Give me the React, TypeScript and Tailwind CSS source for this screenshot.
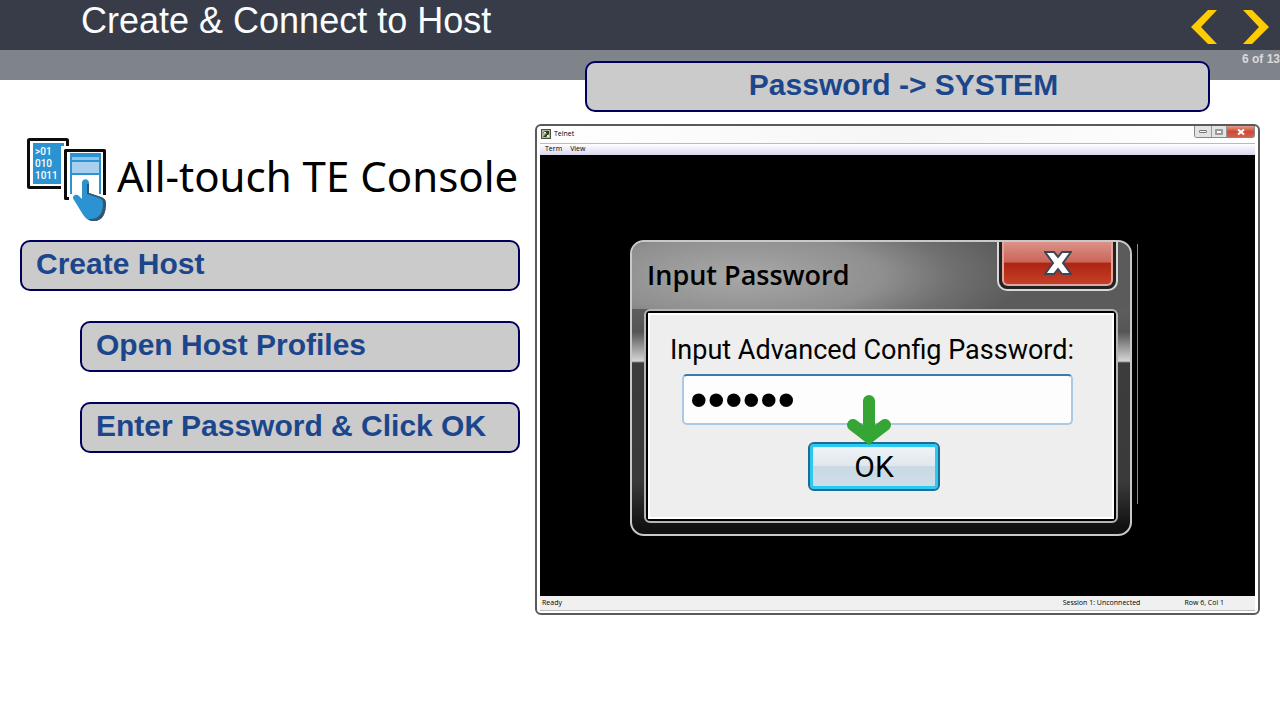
import type { ReactNode } from 'react';

interface StepProps {
  children: ReactNode;
  nested?: boolean;
}

function Step({ children, nested }: StepProps) {
  return (
    <li
      className={`flex h-[51px] items-center rounded-[10px] border-2 border-[#00005c] bg-[#cbcbcb] px-3.5 pb-1 font-['Liberation_Sans'] text-[30px] font-bold leading-9 text-[#1c468c] whitespace-nowrap ${
        nested ? 'ml-[60px]' : ''
      }`}
    >
      {children}
    </li>
  );
}

function ConsoleLogo() {
  return (
    <svg viewBox="0 0 80 84" className="h-[84px] w-20 shrink-0" aria-hidden="true">
      <rect x="1.5" y="1.5" width="39" height="48" rx="1" fill="#fff" stroke="#0b0b0b" strokeWidth="3" />
      <rect x="6" y="5" width="31" height="41" fill="#2b93d2" />
      <g fill="#fff" fontFamily="Roboto, sans-serif" fontSize="10" fontWeight="500">
        <text x="8" y="17">&gt;01</text>
        <text x="8" y="29">010</text>
        <text x="8" y="41">1011</text>
      </g>
      <path d="M34 8h46v52H34z" fill="#fff" />
      <path d="M42 60.500H38.500V12.500H77.500V57" fill="none" stroke="#0b0b0b" strokeWidth="3" strokeLinejoin="round" />
      <path d="M43 15h31v41H43z" fill="#2b93d2" />
      <path d="M45 19h27v3H45z" fill="#8cc4ea" />
      <path d="M45 24h27v11H45z" fill="#a9cfee" />
      <path d="M45 37h27v19H45z" fill="#fff" />
      <path
        d="M55 45c0-5 7-5 7 0v10l12 4c3 1 5 3 5 6 0 10-3 18-12 18-6 0-9-3-12-8l-8-13c-3-4 2-7 5-4l3 3z"
        fill="#2b93d2"
        stroke="#fff"
        strokeWidth="3"
        paintOrder="stroke"
      />
      <path d="M62 46v9l12 4c3 1 5 3 5 6 0 10-3 18-12 18-2 0-4 0-6-2 11 1 15-6 15-15 0-4-1-5-4-6l-12-4V46z" fill="#35546f" />
    </svg>
  );
}

function WindowButtons() {
  return (
    <div className="flex h-3 w-[61px] overflow-hidden rounded-b-[3px] border border-t-0 border-[#888]">
      <button aria-label="Minimize" className="flex w-4 items-center justify-center bg-[#e3e3e3]">
        <span className="h-[3px] w-2 rounded-[1px] border border-[#777] bg-white" />
      </button>
      <button aria-label="Maximize" className="flex w-4 items-center justify-center border-x border-[#999] bg-[#e3e3e3]">
        <span className="h-[6px] w-2 rounded-[1px] border-2 border-[#999] bg-white" />
      </button>
      <button aria-label="Close" className="flex flex-1 items-center justify-center bg-linear-to-b from-[#e39a8b] via-[#cf4a34] to-[#d0604c]">
        <svg viewBox="0 0 8 6" className="h-[6px] w-2">
          <path d="M1 0.500l6 5M7 0.500l-6 5" stroke="#fff" strokeWidth="2" />
        </svg>
      </button>
    </div>
  );
}

function PasswordDialog() {
  return (
    <section className="relative h-[296px] w-[502px] rounded-[14px] border-2 border-[#c9c9c9] bg-[linear-gradient(to_bottom,#7a7a7a_0px,#5c5c5c_70px,#555_90px,#d5d5d5_119px,#3c3c3c_121px,#3a3a3a_240px,#111_285px)]">
      <header className="flex h-[67px] items-start justify-between rounded-t-xl bg-[radial-gradient(ellipse_280px_80px_at_110px_50%,#a8a8a8_0%,#8f8f8f_50%,#707070_75%,#5b5b5b_100%)] pl-[15px] pr-3">
        <h2 className="pt-[13px] font-['Open_Sans'] text-[27px] font-semibold leading-10 text-black">Input Password</h2>
        <button
          aria-label="Close dialog"
          className="h-[49px] w-[121px] rounded-b-[10px] border-2 border-t-0 border-[#d8d8d8] bg-[#222] px-[3px] pb-[3px]"
        >
          <span className="flex h-full items-center justify-center rounded-b-md border-2 border-t-0 border-[#e0a59c] bg-[linear-gradient(to_bottom,#dc9288_0%,#c9655a_48%,#ae2410_50%,#c4402a_100%)]">
            <svg viewBox="0 0 28 26" className="h-[26px] w-7">
              <path d="M1 2h9l4 5 4-5h9l-8 11 8 11h-9l-4-5-4 5H1l8-11z" fill="#fff" stroke="#3d4656" strokeWidth="2" />
            </svg>
          </span>
        </button>
      </header>
      <form
        onSubmit={(e) => e.preventDefault()}
        className="mx-3 flex h-[214px] flex-col rounded-md border-2 border-[#b5b5b5] bg-black p-[2px]"
      >
        <div className="flex flex-1 flex-col border-2 border-white bg-[#eee] pl-5">
          <label htmlFor="password" className="pt-[15px] font-['Roboto'] text-[27px] leading-10 text-black whitespace-nowrap">
            Input Advanced Config Password:
          </label>
          <input
            id="password"
            type="password"
            defaultValue="SYSTEM"
            className="ml-3 mt-1 h-[51px] w-[391px] rounded-[5px] border-2 border-[#a9c9e6] border-t-[#3f79a9] bg-[#fdfdfd] px-1.5 font-['Liberation_Sans'] text-[50px] leading-none text-black outline-none"
          />
          <button className="ml-[138px] mt-[17px] h-[49px] w-[132px] rounded-md border-2 border-[#1c6c94] bg-[linear-gradient(to_bottom,#f0f4f7_0%,#e0e8ee_48%,#c9dae5_50%,#d0dfe8_100%)] font-['Roboto'] text-[30px] leading-none text-black inset-ring-3 inset-ring-[#2cc8f2]">
            OK
          </button>
        </div>
      </form>
      <svg viewBox="0 0 48 50" className="absolute left-[213px] top-[153px] h-[50px] w-12" aria-hidden="true">
        <path d="M24 6v34M8 30l16 12 16-12" fill="none" stroke="#35a535" strokeWidth="12" strokeLinecap="round" />
        <path d="M6 35l18 15 18-15-18-6z" fill="#35a535" />
      </svg>
    </section>
  );
}

function TelnetWindow() {
  return (
    <section className="mt-3 rounded-md border-2 border-[#5a5a5a] bg-white px-[3px] pb-0.5 font-['Open_Sans'] text-[7px] leading-3 text-black">
      <header className="flex h-[17px] items-start justify-between bg-linear-to-r from-white via-[#f6f6f6] to-white">
        <div className="flex items-center gap-[3px] pt-0.5 pl-px">
          <svg viewBox="0 0 10 10" className="size-[10px]" aria-hidden="true">
            <path d="M0 0h10v10H0z" fill="#46553a" />
            <path d="M1 1h8v8H1z" fill="#a9b896" />
            <path d="M2 4l2-2h4v3L5 8H2l4-4H4z" fill="#2f3b25" />
            <path d="M3 3h2v1H3zM6 6h2v2H6z" fill="#eef3e6" />
          </svg>
          <h2>Telnet</h2>
        </div>
        <WindowButtons />
      </header>
      <nav className="flex h-3 items-center gap-2 border-t border-[#bbb] bg-linear-to-b from-white to-[#d9d7ef] pb-px pl-[5px]">
        <button>Term</button>
        <button>View</button>
      </nav>
      <div className="flex h-[441px] gap-[5px] bg-black pl-[90px] pt-[85px]">
        <PasswordDialog />
        <div className="mt-1 h-[260px] w-px bg-[#8a8a8a]" />
      </div>
      <footer className="flex h-[15px] items-center border-b border-[#bbb] bg-[#f0f0f0] pl-0.5 pr-[31px]">
        <span>Ready</span>
        <span className="ml-auto">Session 1: Unconnected</span>
        <span className="ml-11">Row 6, Col 1</span>
      </footer>
    </section>
  );
}

export default function App() {
  return (
    <div className="min-h-screen bg-white">
      <header>
        <div className="flex h-[50px] items-start justify-between bg-[#373c48] pl-[81px] pr-[11px]">
          <h1 className="font-['Liberation_Sans'] text-[36px] leading-[42px] text-[#fafdff]">Create &amp; Connect to Host</h1>
          <nav className="flex gap-[26px] pt-[10px]">
            <button aria-label="Previous">
              <svg viewBox="0 0 26 34" className="h-[34px] w-[26px]">
                <path d="M17 0h9L10 17l16 17h-9L0 17z" fill="#fc0" />
              </svg>
            </button>
            <button aria-label="Next">
              <svg viewBox="0 0 26 34" className="h-[34px] w-[26px]">
                <path d="M9 0H0l16 17L0 34h9l17-17z" fill="#fc0" />
              </svg>
            </button>
          </nav>
        </div>
        <div className="flex h-[30px] justify-end bg-[#7f848b]">
          <p className="font-['Liberation_Sans'] text-[12px] font-bold leading-[18px] text-[#d9dade]">6 of 13</p>
        </div>
      </header>
      <main className="grid grid-cols-[500px_minmax(0,1fr)] gap-[15px] px-5">
        <div className="pt-[58px]">
          <div className="flex items-center gap-[10px] pl-[7px]">
            <ConsoleLogo />
            <h2 className="pb-2 font-['Noto_Sans'] text-[42px] leading-[56px] text-black whitespace-nowrap">All-touch TE Console</h2>
          </div>
          <ul className="mt-[18px] flex flex-col gap-[30px]">
            <Step>Create Host</Step>
            <Step nested>Open Host Profiles</Step>
            <Step nested>Enter Password &amp; Click OK</Step>
          </ul>
        </div>
        <div className="-mt-[19px]">
          <p className="relative mx-[50px] flex h-[51px] items-center justify-center rounded-[10px] border-2 border-[#00005c] bg-[#cbcbcb] pb-1 pl-3 font-['Liberation_Sans'] text-[30px] font-bold leading-9 text-[#1c468c]">
            Password -&gt; SYSTEM
          </p>
          <TelnetWindow />
        </div>
      </main>
    </div>
  );
}
